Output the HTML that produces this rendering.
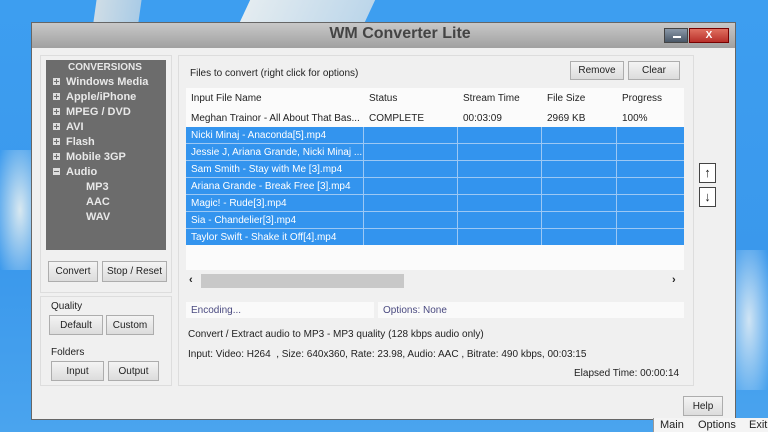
<!DOCTYPE html>
<html><head><style>
*{margin:0;padding:0;box-sizing:border-box}
body{width:768px;height:432px;overflow:hidden;position:relative;font-family:"Liberation Sans",Arial,sans-serif;font-size:10px;color:#222;
background:linear-gradient(180deg,#3d9ef0 0%,#3a98ec 60%,#4aa4ee 100%)}
.a{position:absolute}
.btn{position:absolute;background:linear-gradient(#f4f4f4,#dcdcdc);border:1px solid #adadad;text-align:center;font-size:10px;color:#222}
.tree div{position:absolute;color:#e8e8e8;font-weight:bold;font-size:11px}
.pl{display:inline-block;width:7px;height:7px;background:#ddd;margin-right:6px;vertical-align:0px;position:relative}
.pl::before{content:"";position:absolute;left:1px;top:3px;width:5px;height:1px;background:#6c6c6c}
.pl.p::after{content:"";position:absolute;left:3px;top:1px;width:1px;height:5px;background:#6c6c6c}
.row{position:absolute;left:186px;width:498px;height:16px;background:#3394ee;color:#fff;font-size:10px;line-height:17px}
.row span,.hd span{position:absolute;top:0;padding-left:5px}
.vl{position:absolute;top:0;bottom:0;width:1px;background:#9cc8f4}
</style></head><body>
<div class="a" style="left:95px;top:0;width:45px;height:22px;background:linear-gradient(90deg,#cfdde6,#a9cbe6);transform:skewX(-8deg)"></div>
<div class="a" style="left:245px;top:0;width:125px;height:22px;background:linear-gradient(90deg,#e4ecf0,#bcd6ea);transform:skewX(-25deg)"></div>
<div class="a" style="left:0;top:150px;width:40px;height:120px;background:radial-gradient(#d8e8f0,rgba(80,160,230,0));"></div>
<div class="a" style="left:730px;top:250px;width:38px;height:140px;background:radial-gradient(#cfe4f4,rgba(80,160,230,0));"></div>
<!-- window -->
<div class="a" style="left:31px;top:22px;width:705px;height:398px;background:#f0f0f0;border:1px solid #666"></div>
<div class="a" style="left:32px;top:23px;width:703px;height:25px;background:linear-gradient(#c8c8c8,#a0a0a0)"></div>
<div class="a" style="top:25px;width:768px;text-align:center;font-size:16px;font-weight:bold;color:#444;left:0;padding-left:32px">WM Converter Lite</div>
<div class="a" style="left:664px;top:28px;width:24px;height:15px;background:linear-gradient(#8a98a8,#4a5868);border:1px solid #444"><div class="a" style="left:8px;top:7px;width:8px;height:2px;background:#fff"></div></div>
<div class="a" style="left:689px;top:28px;width:40px;height:15px;background:linear-gradient(#e07060,#b8302a);border:1px solid #700;color:#fff;font-weight:bold;text-align:center;font-size:10px;line-height:13px">X</div>
<!-- left group -->
<div class="a" style="left:40px;top:55px;width:132px;height:238px;border:1px solid #ddd"></div>
<div class="a tree" style="left:46px;top:60px;width:120px;height:190px;background:#6c6c6c">
<div style="left:22px;top:2px;font-size:10px">CONVERSIONS</div>
<div style="left:7px;top:16px"><span class="pl p"></span>Windows Media</div>
<div style="left:7px;top:31px"><span class="pl p"></span>Apple/iPhone</div>
<div style="left:7px;top:46px"><span class="pl p"></span>MPEG / DVD</div>
<div style="left:7px;top:61px"><span class="pl p"></span>AVI</div>
<div style="left:7px;top:76px"><span class="pl p"></span>Flash</div>
<div style="left:7px;top:91px"><span class="pl p"></span>Mobile 3GP</div>
<div style="left:7px;top:106px"><span class="pl"></span>Audio</div>
<div style="left:40px;top:121px">MP3</div>
<div style="left:40px;top:136px">AAC</div>
<div style="left:40px;top:151px">WAV</div>
</div>
<div class="btn" style="left:48px;top:261px;width:50px;height:21px;line-height:20px">Convert</div>
<div class="btn" style="left:102px;top:261px;width:65px;height:21px;line-height:20px">Stop / Reset</div>
<div class="a" style="left:40px;top:296px;width:132px;height:90px;border:1px solid #ddd"></div>
<div class="a" style="left:51px;top:301px">Quality</div>
<div class="btn" style="left:49px;top:315px;width:54px;height:20px;line-height:19px">Default</div>
<div class="btn" style="left:106px;top:315px;width:48px;height:20px;line-height:19px">Custom</div>
<div class="a" style="left:51px;top:347px">Folders</div>
<div class="btn" style="left:51px;top:361px;width:53px;height:20px;line-height:19px">Input</div>
<div class="btn" style="left:108px;top:361px;width:51px;height:20px;line-height:19px">Output</div>
<!-- right group -->
<div class="a" style="left:178px;top:55px;width:516px;height:331px;border:1px solid #ddd"></div>
<div class="a" style="left:190px;top:68px">Files to convert (right click for options)</div>
<div class="btn" style="left:570px;top:61px;width:54px;height:19px;line-height:18px">Remove</div>
<div class="btn" style="left:628px;top:61px;width:52px;height:19px;line-height:18px">Clear</div>
<div class="a" style="left:186px;top:88px;width:498px;height:182px;background:#fbfbfb"></div>
<div class="a hd" style="left:186px;top:88px;width:498px;height:22px;line-height:22px">
<span style="left:0">Input File Name</span><span style="left:178px">Status</span><span style="left:272px">Stream Time</span><span style="left:356px">File Size</span><span style="left:431px">Progress</span></div>
<div class="a hd" style="left:186px;top:110px;width:498px;height:17px;line-height:17px">
<span style="left:0">Meghan Trainor - All About That Bas...</span><span style="left:178px">COMPLETE</span><span style="left:272px">00:03:09</span><span style="left:356px">2969 KB</span><span style="left:431px">100%</span></div>
<div class="row" style="top:127px"><span>Nicki Minaj - Anaconda[5].mp4</span></div>
<div class="row" style="top:144px"><span>Jessie J, Ariana Grande, Nicki Minaj ...</span></div>
<div class="row" style="top:161px"><span>Sam Smith - Stay with Me [3].mp4</span></div>
<div class="row" style="top:178px"><span>Ariana Grande - Break Free [3].mp4</span></div>
<div class="row" style="top:195px"><span>Magic! - Rude[3].mp4</span></div>
<div class="row" style="top:212px"><span>Sia - Chandelier[3].mp4</span></div>
<div class="row" style="top:229px"><span>Taylor Swift - Shake it Off[4].mp4</span></div>
<div class="a" style="left:186px;top:127px;width:498px;height:118px">
<div class="vl" style="left:177px"></div><div class="vl" style="left:271px"></div><div class="vl" style="left:355px"></div><div class="vl" style="left:430px"></div>
<div class="a" style="left:0;right:0;top:16px;height:1px;background:#9cc8f4"></div><div class="a" style="left:0;right:0;top:33px;height:1px;background:#9cc8f4"></div><div class="a" style="left:0;right:0;top:50px;height:1px;background:#9cc8f4"></div><div class="a" style="left:0;right:0;top:67px;height:1px;background:#9cc8f4"></div><div class="a" style="left:0;right:0;top:84px;height:1px;background:#9cc8f4"></div><div class="a" style="left:0;right:0;top:101px;height:1px;background:#9cc8f4"></div>
</div>
<div class="a" style="left:186px;top:271px;width:498px;height:20px;background:#f0f0f0"></div>
<div class="a" style="left:189px;top:274px;font-size:11px;font-weight:bold">‹</div>
<div class="a" style="left:672px;top:274px;font-size:11px;font-weight:bold">›</div>
<div class="a" style="left:201px;top:274px;width:203px;height:14px;background:#c8c8c8"></div>
<div class="a" style="left:186px;top:302px;width:188px;height:16px;background:#fafafa;color:#4a4a80;padding:3px 5px">Encoding...</div>
<div class="a" style="left:378px;top:302px;width:306px;height:16px;background:#fafafa;color:#4a4a80;padding:3px 5px">Options: None</div>
<div class="a" style="left:188px;top:329px">Convert / Extract audio to MP3 - MP3 quality (128 kbps audio only)</div>
<div class="a" style="left:188px;top:349px">Input: Video: H264 &nbsp;, Size: 640x360, Rate: 23.98, Audio: AAC , Bitrate: 490 kbps, 00:03:15</div>
<div class="a" style="left:574px;top:368px">Elapsed Time: 00:00:14</div>
<!-- arrows -->
<div class="a" style="left:699px;top:163px;width:17px;height:20px;border:1px solid #444;background:#fff;text-align:center;font-weight:bold;font-size:13px;line-height:18px">↑</div>
<div class="a" style="left:699px;top:187px;width:17px;height:20px;border:1px solid #444;background:#fff;text-align:center;font-weight:bold;font-size:13px;line-height:18px">↓</div>
<div class="btn" style="left:683px;top:396px;width:40px;height:20px;line-height:19px">Help</div>
<!-- taskbar menu -->
<div class="a" style="left:653px;top:418px;width:115px;height:14px;background:#f4f4f4;border-left:1px solid #999;font-size:11px;line-height:14px;color:#222">
<span style="position:absolute;left:6px">Main</span><span style="position:absolute;left:44px">Options</span><span style="position:absolute;left:95px">Exit</span></div>
</body></html>
